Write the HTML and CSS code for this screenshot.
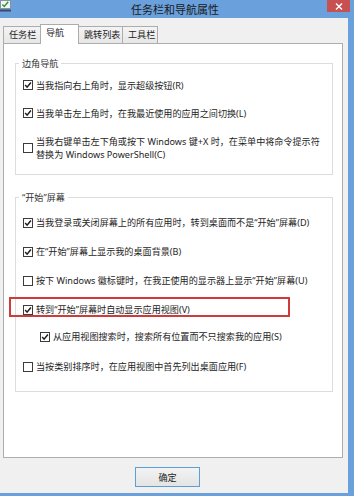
FILE: index.html
```html
<!DOCTYPE html>
<html lang="zh-CN">
<head>
<meta charset="utf-8">
<title>任务栏和导航属性</title>
<link rel="stylesheet" href="styles.css">
</head>
<body>
<div class="window">
  <div class="titlebar">
    <svg class="app-icon" width="11" height="12" viewBox="0 0 11 12">
      <rect x="0.5" y="0.5" width="10" height="8" fill="#f4f4f4" stroke="#8393a6"/>
      <path d="M2.4 4.4 L4.3 6.4 L8.2 1.8" stroke="#2f9a2f" stroke-width="1.5" fill="none"/>
      <rect x="0" y="9.5" width="11" height="2" fill="#3a4a66"/>
    </svg>
    <div class="title">任务栏和导航属性</div>
    <div class="close">
      <svg width="8" height="7" viewBox="0 0 8 7"><path d="M1 0.5 L7 6.5 M7 0.5 L1 6.5" stroke="#fff" stroke-width="1.4"/></svg>
    </div>
  </div>
  <div class="client">
    <div class="tabs">
      <div class="tab t1">任务栏</div>
      <div class="tab t2 active">导航</div>
      <div class="tab t3">跳转列表</div>
      <div class="tab t4">工具栏</div>
    </div>
    <div class="panel">
      <fieldset class="group g1">
        <legend>边角导航</legend>
        <div class="opt"><span class="cb"><svg width="8" height="8" viewBox="0 0 8 8"><path d="M1.2 4.1 L3.1 6.2 L6.9 1.5" stroke="#1e1e1e" stroke-width="1.5" fill="none"/></svg></span><span class="txt">当我指向右上角时，显示超级按钮(R)</span></div>
        <div class="opt"><span class="cb"><svg width="8" height="8" viewBox="0 0 8 8"><path d="M1.2 4.1 L3.1 6.2 L6.9 1.5" stroke="#1e1e1e" stroke-width="1.5" fill="none"/></svg></span><span class="txt">当我单击左上角时，在我最近使用的应用之间切换(L)</span></div>
        <div class="opt"><span class="cb"></span><span class="txt">当我右键单击左下角或按下 Windows 键+X 时，在菜单中将命令提示符<br>替换为 Windows PowerShell(C)</span></div>
      </fieldset>
      <fieldset class="group g2">
        <legend>“开始”屏幕</legend>
        <div class="opt"><span class="cb"><svg width="8" height="8" viewBox="0 0 8 8"><path d="M1.2 4.1 L3.1 6.2 L6.9 1.5" stroke="#1e1e1e" stroke-width="1.5" fill="none"/></svg></span><span class="txt">当我登录或关闭屏幕上的所有应用时，转到桌面而不是“开始”屏幕(D)</span></div>
        <div class="opt"><span class="cb"><svg width="8" height="8" viewBox="0 0 8 8"><path d="M1.2 4.1 L3.1 6.2 L6.9 1.5" stroke="#1e1e1e" stroke-width="1.5" fill="none"/></svg></span><span class="txt">在“开始”屏幕上显示我的桌面背景(B)</span></div>
        <div class="opt"><span class="cb"></span><span class="txt">按下 Windows 徽标键时，在我正使用的显示器上显示“开始”屏幕(U)</span></div>
        <div class="opt"><span class="cb"><svg width="8" height="8" viewBox="0 0 8 8"><path d="M1.2 4.1 L3.1 6.2 L6.9 1.5" stroke="#1e1e1e" stroke-width="1.5" fill="none"/></svg></span><span class="txt">转到“开始”屏幕时自动显示应用视图(V)</span></div>
        <div class="opt sub"><span class="cb"><svg width="8" height="8" viewBox="0 0 8 8"><path d="M1.2 4.1 L3.1 6.2 L6.9 1.5" stroke="#1e1e1e" stroke-width="1.5" fill="none"/></svg></span><span class="txt">从应用视图搜索时，搜索所有位置而不只搜索我的应用(S)</span></div>
        <div class="opt last"><span class="cb"></span><span class="txt">当按类别排序时，在应用视图中首先列出桌面应用(F)</span></div>
      </fieldset>
      <div class="mark"></div>
    </div>
    <div class="actions">
      <button class="btn">确定</button>
    </div>
  </div>
</div>
</body>
</html>
```

FILE: styles.css
```css
* { box-sizing: border-box; }
html, body { margin: 0; padding: 0; }
body {
  width: 354px;
  height: 496px;
  overflow: hidden;
  font-family: "Noto Sans", "Noto Sans CJK SC", sans-serif;
  font-size: 9.1px;
  color: #1e1e1e;
  background: #6aa0dc;
}
.window {
  width: 354px;
  height: 496px;
  background: #6aa0dc;
  display: flex;
  flex-direction: column;
}
.titlebar {
  height: 18px;
  flex: none;
  display: grid;
  grid-template-columns: 1fr auto 1fr;
  align-items: start;
}
.app-icon { display: block; margin-top: 0; }
.title {
  font-size: 11px;
  line-height: 19px;
  color: #1a1a1a;
  margin-right: 4px;
}
.close {
  justify-self: end;
  width: 23px;
  height: 12px;
  margin-right: 4px;
  background: #c75050;
  display: flex;
  align-items: center;
  justify-content: center;
}
.close svg { display: block; }
.client {
  flex: 1;
  margin: 0 6px 3px 0;
  background: #f0f0f0;
  display: flex;
  flex-direction: column;
  padding-top: 6px;
}
.tabs {
  display: flex;
  align-items: flex-end;
  height: 19px;
  margin-left: 3px;
  position: relative;
  z-index: 1;
}
.tab {
  height: 17px;
  border: 1px solid #acacac;
  border-bottom: none;
  background: linear-gradient(#f4f4f4, #e7e7e7);
  padding-left: 5px;
  line-height: 16px;
  white-space: nowrap;
}
.tab + .tab { margin-left: -1px; }
.t1 { width: 38px; }
.t2 { width: 39px; }
.t3 { width: 45px; }
.t4 { width: 36px; }
.tab.active {
  height: 20px;
  margin-bottom: -1px;
  background: #fff;
  position: relative;
}
.panel {
  position: relative;
  width: 340px;
  height: 415px;
  margin-left: 3px;
  border: 1px solid #adadad;
  background: #fff;
  flex: none;
}
.group {
  margin: 12.5px 9px 0 11px;
  border: 1px solid #dcdcdc;
  padding: 9px 6px 13px 7px;
  min-width: 0;
}
.group legend {
  padding: 0 3px;
  margin-left: -4px;
  line-height: 13px;
  color: #333;
}
.opt {
  display: flex;
  align-items: center;
  gap: 3px;
  line-height: 13px;
}
.g1 .opt + .opt { margin-top: 15px; }
.g2 {
  margin-top: 16.5px;
  padding-top: 12px;
  padding-bottom: 18px;
}
.g2 .opt + .opt { margin-top: 16px; }
.g2 .opt.sub { margin-top: 14px; margin-left: 17px; }
.g2 .opt.last { margin-top: 17px; }
.cb {
  width: 10px;
  height: 10px;
  border: 1px solid #3c3c3c;
  background: #fff;
  flex: none;
  display: flex;
  align-items: center;
  justify-content: center;
}
.cb svg { display: block; }
.txt { white-space: nowrap; }
.mark {
  position: absolute;
  left: 5px;
  top: 253px;
  width: 281px;
  height: 20px;
  border: 2px solid #cf3b3b;
  pointer-events: none;
}
.actions {
  padding: 9px 0 0 135px;
}
.btn {
  display: block;
  width: 65px;
  height: 20px;
  border: 1px solid #5a9fd8;
  background: linear-gradient(#f3f3f3, #e4e4e4);
  font: inherit;
  color: #1e1e1e;
  padding: 0;
  margin: 0;
}
```
